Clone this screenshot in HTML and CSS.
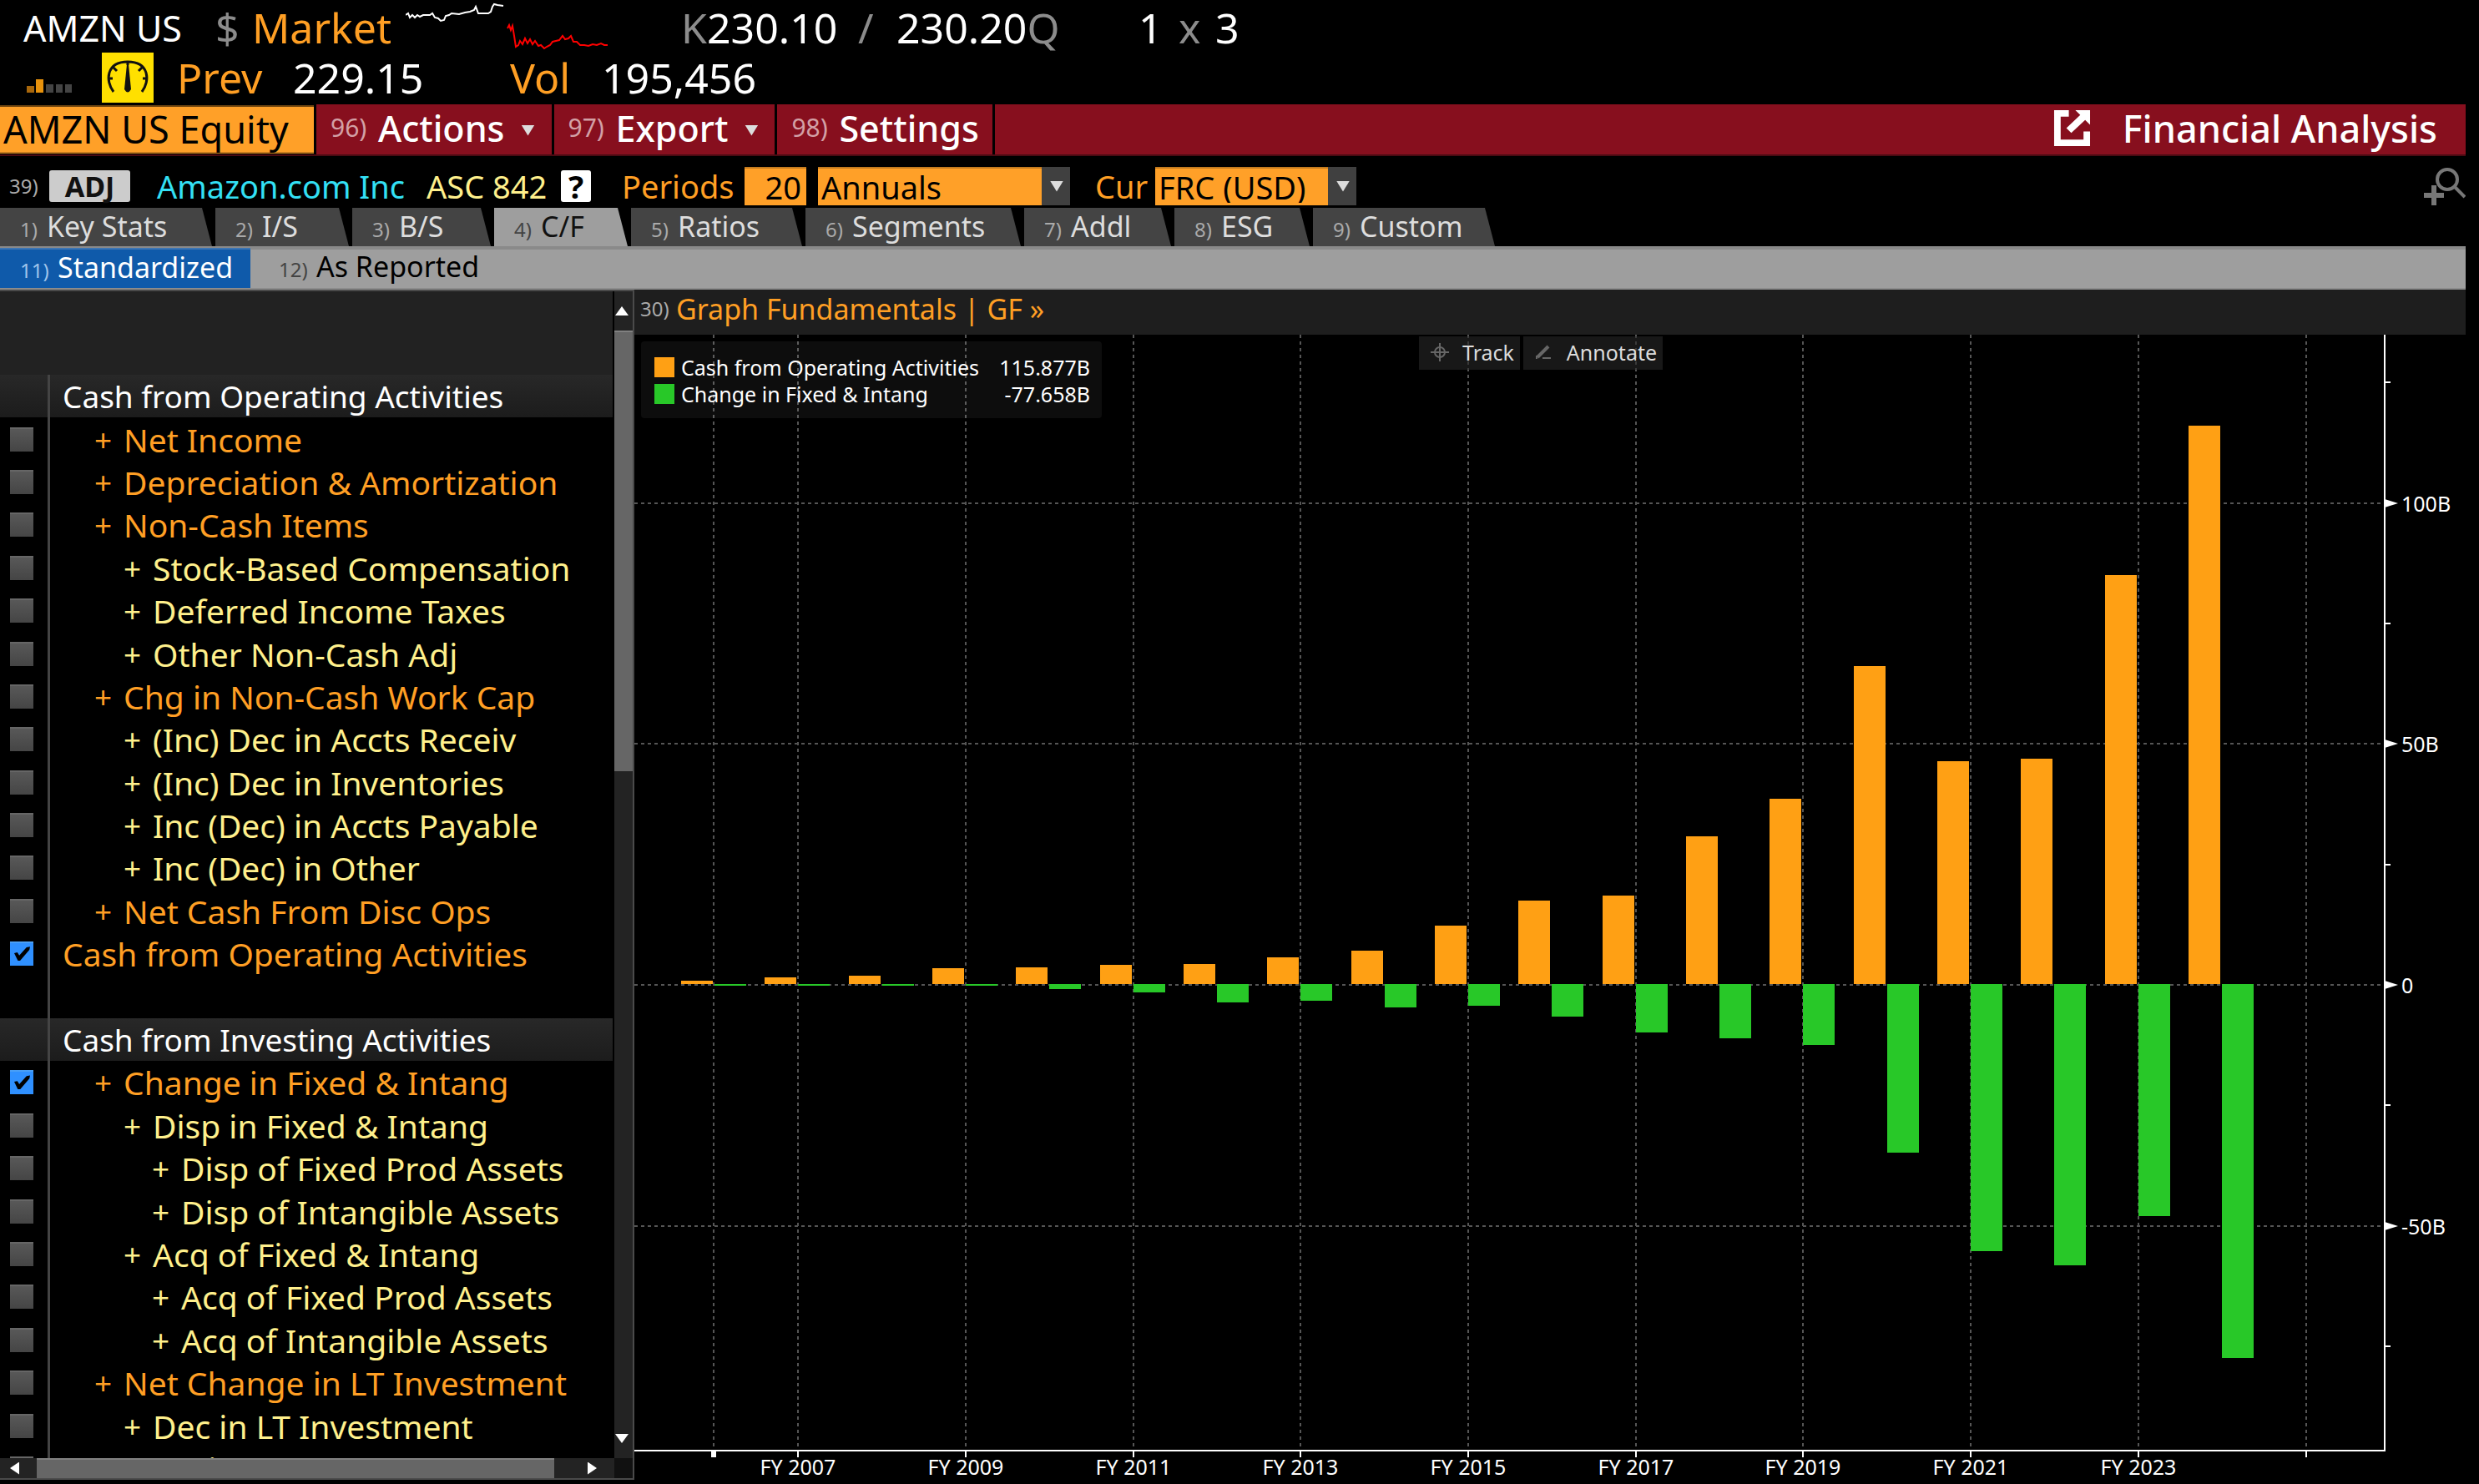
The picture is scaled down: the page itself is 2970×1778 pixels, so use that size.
FILE: index.html
```html
<!DOCTYPE html>
<html lang="en">

<head>
    <meta charset="UTF-8">
    <meta name="viewport" content="width=device-width, initial-scale=1.0">
    <title>AMZN US Equity - Financial Analysis</title>
    <link rel="stylesheet" href="styles.css">
</head>

<body>
    <header class="quote">
        <div class="quote-row quote-top">
            <span class="white ticker">AMZN US</span>
            <span class="dim">$</span>
            <span class="amber">Market</span>
            <svg class="spark" viewBox="0 0 242 60" fill="none" stroke-width="2">
                <path stroke="#fff" d="M0 15l3-2 2 5 3-3 3 3 3-3 3 2 4-2 8 0 3-2 3 5 4 1 3 3 4-1 2-5 4-1 3-2 9 1 7-2 6-1 5-2 2-4 3 8 12 0 3-2 2-6 2-3 4 1 7 1" />
                <path stroke="#f00" d="M122 31l2-4 2 6 2-5 2 12 2 13 3-2 2-5 3 4 3-7 3 6 3-5 3 6 3-4 4 6 3-1 4 4 3-2 4-2 3-4 4-1 4-1 4-5 3 4 4-1 3-3 3 7 4 0 4 4 5 0 5 1 5-2 5 1 5-2 4 2 6 0" />
            </svg>
            <span><span class="dim">K</span><span class="white">230.10</span></span>
            <span class="dim">/</span>
            <span><span class="white">230.20</span><span class="dim">Q</span></span>
            <span class="white">1</span>
            <span class="dim">x</span>
            <span class="white">3</span>
        </div>
        <div class="quote-row quote-bottom">
            <svg class="signal" viewBox="0 0 54 16">
                <path fill="#a8670c" d="M0 8h9v8H0z" />
                <path fill="#e8920c" d="M11 0h9v16h-9z" />
                <path fill="#444" d="M23 6h9v10h-9zM35 6h8v10h-8zM46 6h8v10h-8z" />
            </svg>
            <span class="gauge">
                <svg viewBox="0 0 62 60" fill="none" stroke="#111" stroke-width="3">
                    <path d="M14 47C4 34 5 11 31 11S58 34 48 47M7 31h6M55 31h-6M13 17l5 5M49 17l-5 5M31 11v4" />
                    <path fill="#111" stroke="none" d="M30 14h2l3 30q-4 7-8 0z" />
                </svg>
            </span>
            <span class="amber">Prev</span>
            <span class="white">229.15</span>
            <span class="amber">Vol</span>
            <span class="white">195,456</span>
        </div>
    </header>

    <nav class="menu">
        <span class="security">AMZN US Equity</span>
        <button class="menu-btn"><span class="num">96)</span>Actions<i class="caret"></i></button>
        <button class="menu-btn"><span class="num">97)</span>Export<i class="caret"></i></button>
        <button class="menu-btn"><span class="num">98)</span>Settings</button>
        <div class="menu-title">
            <svg class="popout" viewBox="0 0 46 46" fill="#fff">
                <path d="M1 1h18v8H9v28h28V27h8v18H1z" />
                <path d="M27 1h18v18l-6-6-17 16-6-6 17-16z" />
            </svg>
            <span>Financial Analysis</span>
        </div>
    </nav>

    <div class="toolbar">
        <span class="num">39)</span>
        <button class="adj">ADJ</button>
        <span class="cyan">Amazon.com Inc</span>
        <span class="yellow">ASC 842</span>
        <button class="help">?</button>
        <label class="amber" for="periods">Periods</label>
        <input type="text" id="periods" value="20">
        <div class="drop">
            <select id="periodicity" aria-label="Periodicity">
                <option>Annuals</option>
            </select>
            <i class="caret"></i>
        </div>
        <label class="amber" for="currency">Cur</label>
        <div class="drop drop-cur">
            <select id="currency">
                <option>FRC (USD)</option>
            </select>
            <i class="caret"></i>
        </div>
        <svg class="search" viewBox="0 0 50 46" fill="none" stroke="#777" stroke-width="4">
            <ellipse cx="28" cy="15" rx="12" ry="12" />
            <path d="M36 23l13 13" />
            <path stroke-width="6" d="M0 34h24M12 22v24" />
        </svg>
    </div>

    <nav class="tabs">
        <button class="tab"><span class="num">1)</span>Key Stats</button>
        <button class="tab"><span class="num">2)</span>I/S</button>
        <button class="tab"><span class="num">3)</span>B/S</button>
        <button class="tab active"><span class="num">4)</span>C/F</button>
        <button class="tab"><span class="num">5)</span>Ratios</button>
        <button class="tab"><span class="num">6)</span>Segments</button>
        <button class="tab"><span class="num">7)</span>Addl</button>
        <button class="tab"><span class="num">8)</span>ESG</button>
        <button class="tab"><span class="num">9)</span>Custom</button>
    </nav>
    <nav class="subtabs">
        <button class="subtab selected"><span class="num">11)</span>Standardized</button>
        <button class="subtab"><span class="num">12)</span>As Reported</button>
    </nav>

    <main class="content">
        <aside class="sidebar">
            <div class="list">
                <div class="list-top"></div>
                <div class="rows">
                    <div class="row head"><span class="check"></span><span>Cash from Operating Activities</span></div>
                    <label class="row l1"><span class="check"><input type="checkbox"></span><span>+</span><span>Net Income</span></label>
                    <label class="row l1"><span class="check"><input type="checkbox"></span><span>+</span><span>Depreciation &amp; Amortization</span></label>
                    <label class="row l1"><span class="check"><input type="checkbox"></span><span>+</span><span>Non-Cash Items</span></label>
                    <label class="row l2"><span class="check"><input type="checkbox"></span><span>+</span><span>Stock-Based Compensation</span></label>
                    <label class="row l2"><span class="check"><input type="checkbox"></span><span>+</span><span>Deferred Income Taxes</span></label>
                    <label class="row l2"><span class="check"><input type="checkbox"></span><span>+</span><span>Other Non-Cash Adj</span></label>
                    <label class="row l1"><span class="check"><input type="checkbox"></span><span>+</span><span>Chg in Non-Cash Work Cap</span></label>
                    <label class="row l2"><span class="check"><input type="checkbox"></span><span>+</span><span>(Inc) Dec in Accts Receiv</span></label>
                    <label class="row l2"><span class="check"><input type="checkbox"></span><span>+</span><span>(Inc) Dec in Inventories</span></label>
                    <label class="row l2"><span class="check"><input type="checkbox"></span><span>+</span><span>Inc (Dec) in Accts Payable</span></label>
                    <label class="row l2"><span class="check"><input type="checkbox"></span><span>+</span><span>Inc (Dec) in Other</span></label>
                    <label class="row l1"><span class="check"><input type="checkbox"></span><span>+</span><span>Net Cash From Disc Ops</span></label>
                    <label class="row l0"><span class="check"><input type="checkbox" checked></span><span>Cash from Operating Activities</span></label>
                    <div class="row"><span class="check"></span></div>
                    <div class="row head"><span class="check"></span><span>Cash from Investing Activities</span></div>
                    <label class="row l1"><span class="check"><input type="checkbox" checked></span><span>+</span><span>Change in Fixed &amp; Intang</span></label>
                    <label class="row l2"><span class="check"><input type="checkbox"></span><span>+</span><span>Disp in Fixed &amp; Intang</span></label>
                    <label class="row l3"><span class="check"><input type="checkbox"></span><span>+</span><span>Disp of Fixed Prod Assets</span></label>
                    <label class="row l3"><span class="check"><input type="checkbox"></span><span>+</span><span>Disp of Intangible Assets</span></label>
                    <label class="row l2"><span class="check"><input type="checkbox"></span><span>+</span><span>Acq of Fixed &amp; Intang</span></label>
                    <label class="row l3"><span class="check"><input type="checkbox"></span><span>+</span><span>Acq of Fixed Prod Assets</span></label>
                    <label class="row l3"><span class="check"><input type="checkbox"></span><span>+</span><span>Acq of Intangible Assets</span></label>
                    <label class="row l1"><span class="check"><input type="checkbox"></span><span>+</span><span>Net Change in LT Investment</span></label>
                    <label class="row l2"><span class="check"><input type="checkbox"></span><span>+</span><span>Dec in LT Investment</span></label>
                    <label class="row l2"><span class="check"><input type="checkbox"></span><span>+</span><span>Inc in LT Investment</span></label>
                </div>
            </div>
            <div class="vscroll">
                <button class="sb" aria-label="Scroll up"><i class="arrow up"></i></button>
                <div class="vthumb"></div>
                <div class="vtrack"></div>
                <button class="sb" aria-label="Scroll down"><i class="arrow down"></i></button>
            </div>
            <div class="hscroll">
                <button class="sb" aria-label="Scroll left"><i class="arrow left"></i></button>
                <div class="hthumb"></div>
                <div class="htrack"></div>
                <button class="sb" aria-label="Scroll right"><i class="arrow right"></i></button>
            </div>
            <div class="corner"></div>
        </aside>

        <section class="graph">
            <h2 class="graph-title"><span class="num">30)</span><a href="#">Graph Fundamentals | GF »</a></h2>
            <div class="graph-body">
                <svg id="chart" class="chart" viewBox="0 0 2194 1377"></svg>
                <table class="legend">
                    <tr>
                        <td><i class="swatch orange"></i></td>
                        <td>Cash from Operating Activities</td>
                        <td class="val">115.877B</td>
                    </tr>
                    <tr>
                        <td><i class="swatch green"></i></td>
                        <td>Change in Fixed &amp; Intang</td>
                        <td class="val">-77.658B</td>
                    </tr>
                </table>
                <div class="tools">
                    <button class="tool">
                        <svg viewBox="0 0 22 22" fill="none" stroke="#666" stroke-width="2"><circle cx="11" cy="11" r="6" /><path d="M11 0v22M0 11h22" /></svg>Track
                    </button>
                    <button class="tool">
                        <svg viewBox="0 0 22 22" fill="none" stroke="#666" stroke-width="4"><path d="M3 17L16 4" /><path stroke-width="2" d="M9 18h10M2 15v4" /></svg>Annotate
                    </button>
                </div>
            </div>
        </section>
    </main>

    <script>
        // values in billions, FY 2006 - FY 2024
        const cfo = [0.702, 1.405, 1.697, 3.293, 3.495, 3.903, 4.18, 5.475, 6.842, 12.039, 17.272, 18.365, 30.723, 38.514, 66.064, 46.327, 46.752, 84.946, 115.877];
        const capex = [0.216, 0.224, 0.333, 0.373, 0.979, 1.811, 3.785, 3.444, 4.893, 4.589, 6.737, 10.058, 11.323, 12.689, 35.044, 55.396, 58.321, 48.133, 77.658];

        const axisX = 2097, axisY = 1337;   // right and bottom axis
        const zero = 778, unit = 5.774;     // zero line, pixels per billion
        const step = 100.33, barWidth = 38;
        const chart = document.getElementById('chart');

        function add(tag, attrs, text) {
            const el = document.createElementNS('http://www.w3.org/2000/svg', tag);
            for (const key in attrs) el.setAttribute(key, attrs[key]);
            if (text) el.textContent = text;
            chart.appendChild(el);
        }

        // vertical grid lines, one per two years
        for (let i = -1; i < 18; i += 2) {
            const x = i < 0 ? 95 : Math.round(96 + i * step);
            add('line', { class: 'grid', x1: x, x2: x, y1: 0, y2: axisY });
            if (i < 0) {
                add('rect', { class: 'axis-fill', x: x - 3, y: axisY, width: 6, height: 8 });
            } else {
                add('line', { class: 'axis', x1: x, x2: x, y1: axisY, y2: axisY + 8 });
                add('text', { class: 'label middle', x: x, y: 1366 }, 'FY ' + (2006 + i));
            }
        }
        add('line', { class: 'grid', x1: 2003, x2: 2003, y1: 0, y2: axisY });
        add('line', { class: 'axis', x1: 2003, x2: 2003, y1: axisY, y2: axisY + 8 });

        // value axis, labelled every 50B
        for (let v = 125; v >= -75; v -= 25) {
            const y = Math.round(zero + 1 - v * unit);
            if (v % 50 === 0) {
                add('line', { class: 'grid', x1: 0, x2: axisX, y1: y, y2: y });
                add('path', { class: 'axis-fill', d: `M${axisX} ${y - 5}l16 5-16 5z` });
                add('text', { class: 'label', x: axisX + 20, y: y + 10 }, v === 0 ? '0' : v + 'B');
            } else {
                add('line', { class: 'axis', x1: axisX, x2: axisX + 7, y1: y, y2: y });
            }
        }

        cfo.forEach((value, i) => {
            const x = Math.round(56 + i * step);
            const up = Math.round(value * unit);
            const down = Math.max(2, Math.round(capex[i] * unit));
            add('rect', { class: 'bar-orange', x: x, y: zero - up, width: barWidth, height: up });
            add('rect', { class: 'bar-green', x: x + 40, y: zero, width: barWidth, height: down });
        });

        add('path', { class: 'axis', d: `M0 ${axisY}H${axisX}V0` });
    </script>
</body>

</html>
```
FILE: styles.css
```css
* {
    box-sizing: border-box;
}

body {
    margin: 0;
    padding-right: 16px;
    height: 100vh;
    display: flex;
    flex-direction: column;
    overflow: hidden;
    background: #000;
    color: #fff;
    font-family: "Noto Sans", "Open Sans", sans-serif;
    font-size: 38px;
    line-height: 1;
}

button, input, select {
    font: inherit;
    color: inherit;
    border: 0;
    padding: 0;
    margin: 0;
    background: none;
    border-radius: 0;
    appearance: none;
}

button {
    text-align: left;
    white-space: nowrap;
}

.white { color: #fff; }
.amber { color: #ff9f24; }
.dim { color: #8c8c8c; }
.cyan { color: #33e0f5; }
.yellow { color: #fff08c; }

.num {
    font-size: 24px;
    color: #aaa;
}

.caret {
    width: 16px;
    height: 13px;
    background: #ddd;
    clip-path: polygon(0 0, 100% 0, 50% 100%);
}

/* quote lines */
.quote {
    padding: 3px 0 2px;
    font-size: 50px;
    white-space: nowrap;
}

.quote-row {
    display: grid;
    align-items: center;
    height: 60px;
}

.quote-top {
    grid-template-columns: 230px 44px 184px 330px 212px 46px 290px 48px 44px 60px;
    padding-left: 28px;
}

.quote-bottom {
    grid-template-columns: 90px 90px 139px 260px 110px 200px;
    padding-left: 32px;
}

.ticker {
    font-size: 43px;
}

.spark {
    width: 242px;
    height: 60px;
}

.signal {
    width: 54px;
    height: 16px;
    margin-top: 20px;
}

.gauge {
    width: 62px;
    height: 60px;
    background: #ffe000;
}

.gauge svg {
    display: block;
}

/* red menu bar */
.menu {
    display: flex;
    gap: 3px;
    height: 62px;
    font-size: 43px;
    font-weight: 500;
    border-bottom: 2px solid #4a0a12;
}

.security {
    width: 376px;
    height: 58px;
    margin-top: 1px;
    padding-left: 4px;
    line-height: 54px;
    font-size: 45px;
    font-weight: 400;
    color: #000;
    background: #ffa028;
    border-top: 2px solid #6b430f;
    border-bottom: 2px solid #c47b1e;
}

.menu-btn {
    display: flex;
    align-items: center;
    padding: 0 16px 4px 17px;
    background: #870f1e;
}

.menu-btn .num {
    width: 57px;
    font-size: 30px;
    color: #d3a0a6;
    font-weight: 400;
}

.menu-btn .caret {
    margin: 6px 4px 0 20px;
}

.menu-title {
    flex: 1;
    display: flex;
    align-items: center;
    justify-content: flex-end;
    gap: 38px;
    padding: 0 34px 4px 0;
    font-size: 45px;
    background: #870f1e;
}

.popout {
    width: 45px;
    height: 45px;
}

/* toolbar */
.toolbar {
    display: flex;
    align-items: center;
    height: 62px;
    padding: 10px 0 0 11px;
    white-space: nowrap;
}

.toolbar .num {
    width: 48px;
}

.adj {
    width: 97px;
    height: 38px;
    margin-right: 32px;
    border-radius: 3px;
    background: #ccc;
    color: #111;
    font-size: 34px;
    font-weight: 700;
    line-height: 36px;
    text-align: center;
}

.cyan {
    width: 323px;
}

.yellow {
    width: 161px;
}

.help {
    width: 36px;
    height: 38px;
    margin-right: 37px;
    border-radius: 3px;
    background: #fff;
    color: #000;
    font-weight: 700;
    line-height: 38px;
    text-align: center;
}

label[for="periods"] {
    width: 147px;
}

#periods {
    width: 74px;
    height: 46px;
    padding-right: 6px;
    margin-right: 14px;
    text-align: right;
    color: #000;
    background: #ffa028;
    border-top: 2px solid #c47b1e;
}

.drop {
    display: flex;
    align-items: center;
    width: 302px;
    height: 46px;
    padding-right: 8px;
    margin-right: 30px;
    background: #404040;
}

.drop select {
    flex: 1;
    height: 46px;
    padding-left: 4px;
    margin-right: 10px;
    color: #000;
    background: #ffa028;
    border-top: 2px solid #c47b1e;
}

label[for="currency"] {
    width: 72px;
}

.drop-cur {
    width: 241px;
}

.search {
    width: 50px;
    height: 46px;
    margin-left: auto;
}

/* tabs */
.tabs {
    display: grid;
    grid-template-columns: 254px 160px 166px 160px 205px 258px 176px 162px 218px;
    gap: 4px;
    height: 46px;
    font-size: 34px;
}

.tab {
    padding: 0 0 2px 24px;
    color: #ddd;
    background: #444;
    clip-path: polygon(0 0, calc(100% - 12px) 0, 100% 100%, 0 100%);
}

.tab .num,
.subtab .num {
    display: inline-block;
    width: 32px;
}

.tab.active {
    color: #111;
    background: #9e9e9e;
}

.tab.active .num {
    color: #444;
}

.subtabs {
    display: flex;
    height: 52px;
    padding-top: 2px;
    font-size: 34px;
    background: #9e9e9e;
    border-bottom: 2px solid #8c8c8c;
    box-shadow: inset 0 4px #8a8a8a;
}

.subtab {
    width: 300px;
    padding: 0 0 4px 24px;
    color: #000;
}

.subtab + .subtab {
    padding-left: 34px;
}

.subtab .num {
    width: 45px;
    color: #444;
}

.subtab.selected {
    color: #fff;
    background: #0f5aaa;
    border-top: 2px solid #3d75b3;
}

.subtab.selected .num {
    color: #9fc4ea;
}

/* field list */
.content {
    flex: 1;
    display: flex;
    min-height: 0;
}

.sidebar {
    width: 760px;
    margin-bottom: 5px;
    display: grid;
    grid-template-columns: 1fr 22px;
    grid-template-rows: 1fr 24px;
    border: 2px solid #4a4a4a;
    border-left: 0;
}

.list {
    display: flex;
    flex-direction: column;
    min-height: 0;
    padding-right: 2px;
    white-space: nowrap;
}

.list-top {
    height: 100px;
    background: #222;
}

/* a little over 25 rows are visible */
.rows {
    flex: 1;
    min-height: 0;
    overflow: hidden;
    display: grid;
    grid-auto-rows: 3.96%;
}

.row {
    display: flex;
    align-items: center;
    font-size: 39px;
    color: #fff08c;
}

.row.head {
    color: #fff;
    font-size: 37px;
    background: linear-gradient(#282828, #1c1c1c);
}

.row.l0,
.row.l1 {
    color: #ff9f24;
}

.check {
    display: flex;
    align-items: center;
    align-self: stretch;
    width: 60px;
    padding-left: 12px;
    margin-right: 15px;
    border-right: 3px solid #444;
}

.l1 .check { margin-right: 53px; }
.l2 .check { margin-right: 88px; }
.l3 .check { margin-right: 122px; }

.l1 .check + span,
.l2 .check + span,
.l3 .check + span {
    width: 35px;
    font-size: 37px;
}

input[type="checkbox"] {
    position: relative;
    width: 28px;
    height: 29px;
    background: linear-gradient(#585858, #454545);
    border-top: 2px solid #666;
}

input[type="checkbox"]:checked {
    background: #2f90ff;
    border-top-color: #4a9ff5;
}

input[type="checkbox"]:checked::after {
    content: "";
    position: absolute;
    left: 5px;
    top: 4px;
    width: 19px;
    height: 17px;
    background: #000;
    clip-path: polygon(0 45%, 20% 40%, 32% 62%, 78% 5%, 100% 0, 96% 22%, 36% 100%, 24% 100%);
}

/* scroll bars */
.vscroll {
    display: flex;
    flex-direction: column;
    background: #232323;
}

.vscroll .sb {
    height: 47px;
    padding-left: 1px;
}

.vthumb {
    flex: 526;
    background: #666;
    border-top: 2px solid #808080;
}

.vtrack {
    flex: 777;
}

.hscroll {
    display: flex;
    background: #232323;
}

.hscroll .sb {
    width: 44px;
    padding-left: 12px;
}

.hthumb {
    flex: 620;
    background: #666;
    border-top: 2px solid #808080;
}

.htrack {
    flex: 28;
}

.corner {
    background: #111;
}

.arrow {
    display: block;
    background: #fff;
}

.up, .down {
    width: 16px;
    height: 11px;
}

.left, .right {
    width: 11px;
    height: 15px;
}

.up { clip-path: polygon(50% 0, 100% 100%, 0 100%); }
.down { clip-path: polygon(0 0, 100% 0, 50% 100%); }
.left { clip-path: polygon(100% 0, 100% 100%, 0 50%); }
.right { clip-path: polygon(0 0, 100% 50%, 0 100%); }

/* graph */
.graph {
    flex: 1;
    min-width: 0;
    display: flex;
    flex-direction: column;
}

.graph-title {
    height: 54px;
    margin: 0;
    padding: 0 0 8px 7px;
    display: flex;
    align-items: center;
    font-size: 34px;
    font-weight: 400;
    background: #1e1e1e;
}

.graph-title .num {
    width: 43px;
}

.graph-title a {
    color: #ff9f24;
    text-decoration: none;
}

.graph-body {
    position: relative;
    flex: 1;
    min-height: 0;
}

.chart {
    display: block;
    width: 100%;
    height: 100%;
}

.grid {
    stroke: #555;
    stroke-width: 2;
    stroke-dasharray: 4 4;
}

.axis {
    fill: none;
    stroke: #fff;
    stroke-width: 2;
}

.axis-fill {
    fill: #fff;
}

.label {
    fill: #fff;
    font-size: 25px;
}

.middle {
    text-anchor: middle;
}

.bar-orange { fill: #ffa014; }
.bar-green { fill: #28c828; }

.legend {
    position: absolute;
    left: 8px;
    top: 8px;
    width: 552px;
    height: 92px;
    padding: 15px 14px 13px 16px;
    border-spacing: 0;
    border-radius: 4px;
    background: rgba(255, 255, 255, 0.05);
    font-size: 25px;
    white-space: nowrap;
}

.legend td {
    height: 32px;
    padding: 0;
}

.legend td:first-child {
    width: 32px;
}

.legend .val {
    text-align: right;
}

.swatch {
    display: block;
    width: 24px;
    height: 24px;
}

.orange { background: #ffa014; }
.green { background: #28c828; }

.tools {
    position: absolute;
    left: 940px;
    top: 2px;
    display: flex;
    gap: 4px;
    font-size: 25px;
}

.tool {
    display: flex;
    align-items: center;
    gap: 16px;
    height: 40px;
    padding: 0 7px 2px 14px;
    color: #ddd;
    background: rgba(40, 40, 40, 0.6);
}

.tool svg {
    width: 22px;
    height: 22px;
}
```
